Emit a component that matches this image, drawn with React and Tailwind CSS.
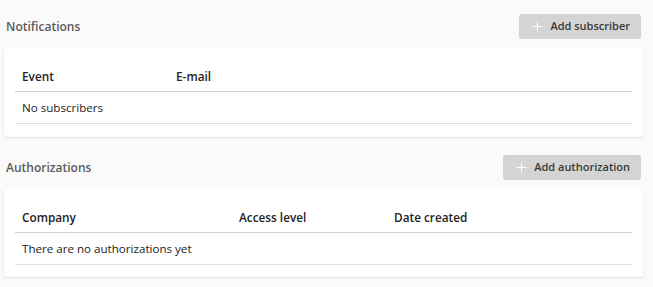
import React from "react";

function PlusIcon() {
  return (
    <svg width="11" height="11" viewBox="0 0 11 11" className="shrink-0">
      <path d="M5.5 0.5V10.5M0.5 5.5H10.5" stroke="#ffffff" strokeWidth="1" />
    </svg>
  );
}

function SectionHeader({ title, button }) {
  return (
    <div className="flex items-center justify-between pl-[6px] pr-[12px]">
      <div className="pt-[1px] text-[12px] font-semibold text-[#5a5a5a]">{title}</div>
      <button className="flex h-[25px] items-center gap-[7px] rounded-[3px] bg-[#d4d4d4] pl-[13px] pr-[11px] text-[11px] font-semibold text-[#3a3a3a]">
        <PlusIcon />
        <span>{button}</span>
      </button>
    </div>
  );
}

export default function App() {
  return (
    <div
      className="h-[287px] w-[653px] bg-[#fafafa] text-[#222222]"
      style={{ fontFamily: '"Open Sans", "Noto Sans", sans-serif' }}
    >
      <div className="pt-[14px]">
        <SectionHeader title="Notifications" button="Add subscriber" />
        <div className="mx-[4px] mt-[9px] w-[639px] rounded-[2px] bg-white px-[11px] pt-[14px] pb-[13px] shadow-[0_1px_2px_rgba(0,0,0,0.12)]">
          <div className="flex h-[30px] items-center border-b border-[#cfcfcf] text-[11.8px] font-semibold">
            <div className="w-[161px] pl-[7px]">Event</div>
            <div>E-mail</div>
          </div>
          <div className="flex h-[32px] items-center border-b border-[#dedede] pl-[7px] text-[11.6px]">
            No subscribers
          </div>
        </div>
      </div>
      <div className="pt-[18px]">
        <SectionHeader title="Authorizations" button="Add authorization" />
        <div className="mx-[4px] mt-[9px] w-[639px] rounded-[2px] bg-white px-[11px] pt-[14px] pb-[12px] shadow-[0_1px_2px_rgba(0,0,0,0.12)]">
          <div className="flex h-[30px] items-center border-b border-[#cfcfcf] text-[11.8px] font-semibold">
            <div className="w-[224px] pl-[7px]">Company</div>
            <div className="w-[155px]">Access level</div>
            <div>Date created</div>
          </div>
          <div className="flex h-[32px] items-center border-b border-[#dedede] pl-[7px] text-[11.6px]">
            There are no authorizations yet
          </div>
        </div>
      </div>
    </div>
  );
}
